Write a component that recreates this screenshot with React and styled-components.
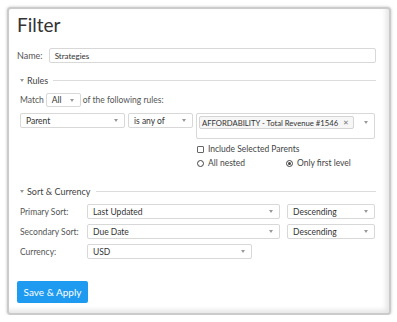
import React from "react";
import styled, { createGlobalStyle } from "styled-components";

const GlobalStyle = createGlobalStyle`
  body {
    margin: 0;
    background: #ffffff;
    font-family: Lato, "Open Sans", sans-serif;
    color: #444;
  }
`;

const Frame = styled.div`
  box-sizing: border-box;
  margin: 7px 0 0 7px;
  width: 384px;
  height: 308px;
  border: 2px solid #cbcbcb;
  border-radius: 4px;
  background: #fff;
  box-shadow: 0 0 3px rgba(0, 0, 0, 0.25), inset -3px -3px 5px rgba(0, 0, 0, 0.1);
  padding: 5px 13px 0 8px;
`;

const Title = styled.h1`
  margin: 0;
  font-size: 19px;
  line-height: 22px;
  font-weight: 400;
  color: #333;
`;

const Row = styled.div`
  display: flex;
  align-items: ${(p) => (p.$top ? "flex-start" : "center")};
  height: ${(p) => p.$h || 15}px;
  margin-top: ${(p) => p.$mt || 0}px;
  padding-left: ${(p) => p.$pl || 0}px;
  gap: ${(p) => p.$gap || 0}px;
`;

const Label = styled.span`
  font-size: ${(p) => p.$fs || 8.5}px;
  color: #555;
  width: ${(p) => (p.$w ? p.$w + "px" : "auto")};
  flex-shrink: 0;
  white-space: nowrap;
`;

const TextInput = styled.div`
  box-sizing: border-box;
  flex: 1;
  height: 15px;
  border: 1px solid #d8d8d8;
  border-radius: 2px;
  font-size: 8px;
  color: #333;
  display: flex;
  align-items: center;
  padding-left: 5px;
`;

const SectionHead = styled.div`
  display: flex;
  align-items: center;
  height: 12px;
  margin-top: ${(p) => p.$mt}px;
  padding-left: 3px;
  font-size: 9px;
  color: #444;
  gap: 3px;

  &::after {
    content: "";
    flex: 1;
    height: 1px;
    background: #dcdcdc;
    margin-left: 2px;
  }
`;

const Caret = styled.span`
  width: 0;
  height: 0;
  border-left: 2.5px solid transparent;
  border-right: 2.5px solid transparent;
  border-top: 3px solid #999;
  flex-shrink: 0;
`;

const SelectBox = styled.div`
  box-sizing: border-box;
  width: ${(p) => p.$w}px;
  height: ${(p) => p.$h || 15}px;
  border: 1px solid #d8d8d8;
  border-radius: 2px;
  display: flex;
  align-items: ${(p) => (p.$top ? "flex-start" : "center")};
  justify-content: space-between;
  padding: ${(p) => (p.$top ? "2px 6px 0 2px" : "0 6px 0 5px")};
  font-size: 8.5px;
  color: #333;
  flex-shrink: 0;
  white-space: nowrap;

  ${Caret} {
    margin-top: ${(p) => (p.$top ? "5px" : "0")};
  }
`;

const Tag = styled.span`
  display: inline-flex;
  align-items: center;
  gap: 5px;
  height: 11px;
  padding: 0 4px 0 2px;
  border: 1px solid #d4d4d4;
  border-radius: 2px;
  background: #f6f6f6;
  font-size: 7.7px;
  color: #333;
  white-space: nowrap;
`;

const Close = styled.span`
  font-size: 7px;
  color: #777;
`;

const Select = ({ w, h, children }) => (
  <SelectBox $w={w} $h={h}>
    <span>{children}</span>
    <Caret />
  </SelectBox>
);

const OptionRow = styled.div`
  display: flex;
  align-items: center;
  height: 12px;
  margin-top: ${(p) => p.$mt}px;
  padding-left: 180px;
  font-size: 8.5px;
  color: #444;
`;

const Check = styled.span`
  box-sizing: border-box;
  width: 7px;
  height: 7px;
  border: 1px solid #666;
  border-radius: 1px;
  margin-right: 4px;
`;

const Radio = styled.span`
  box-sizing: border-box;
  width: 7px;
  height: 7px;
  border: 1px solid #444;
  border-radius: 50%;
  margin-right: 4px;
  display: flex;
  align-items: center;
  justify-content: center;

  &::after {
    content: "";
    width: 3px;
    height: 3px;
    border-radius: 50%;
    background: ${(p) => (p.$on ? "#444" : "transparent")};
  }
`;

const RadioItem = styled.span`
  display: flex;
  align-items: center;
  width: ${(p) => p.$w}px;
`;

const Spacer = styled.span`
  width: ${(p) => p.$w}px;
  flex-shrink: 0;
`;

const Button = styled.button`
  margin-top: 22px;
  width: 71px;
  height: 22px;
  border: none;
  border-radius: 2px;
  background: #1e9bf0;
  color: #fff;
  font-family: Lato, sans-serif;
  font-size: 10px;
  padding: 0;
`;

export default function App() {
  return (
    <>
      <GlobalStyle />
      <Frame>
        <Title>Filter</Title>
        <Row $mt={12} $gap={6}>
          <Label $fs={9}>Name:</Label>
          <TextInput>Strategies</TextInput>
        </Row>
        <SectionHead $mt={11}>
          <Caret />
          Rules
        </SectionHead>
        <Row $mt={7} $h={14} $pl={3} $gap={2}>
          <Label>Match</Label>
          <Select w={35} h={14}>All</Select>
          <Label>of the following rules:</Label>
        </Row>
        <Row $mt={6} $h={26} $pl={3} $gap={3} $top>
          <Select w={105}>Parent</Select>
          <Select w={65}>is any of</Select>
          <SelectBox $w={179} $h={26} $top>
            <Tag>
              AFFORDABILITY - Total Revenue #1546 <Close>✕</Close>
            </Tag>
            <Caret />
          </SelectBox>
        </Row>
        <OptionRow $mt={4}>
          <Check />
          Include Selected Parents
        </OptionRow>
        <OptionRow $mt={2}>
          <RadioItem $w={89}>
            <Radio />
            All nested
          </RadioItem>
          <RadioItem>
            <Radio $on />
            Only first level
          </RadioItem>
        </OptionRow>
        <SectionHead $mt={16}>
          <Caret />
          Sort &amp; Currency
        </SectionHead>
        <Row $mt={7} $pl={3}>
          <Label $w={67}>Primary Sort:</Label>
          <Select w={193}>Last Updated</Select>
          <Spacer $w={7} />
          <Select w={88}>Descending</Select>
        </Row>
        <Row $mt={5} $pl={3}>
          <Label $w={67}>Secondary Sort:</Label>
          <Select w={193}>Due Date</Select>
          <Spacer $w={7} />
          <Select w={88}>Descending</Select>
        </Row>
        <Row $mt={5} $pl={3}>
          <Label $w={67}>Currency:</Label>
          <Select w={165}>USD</Select>
        </Row>
        <Button>Save &amp; Apply</Button>
      </Frame>
    </>
  );
}
